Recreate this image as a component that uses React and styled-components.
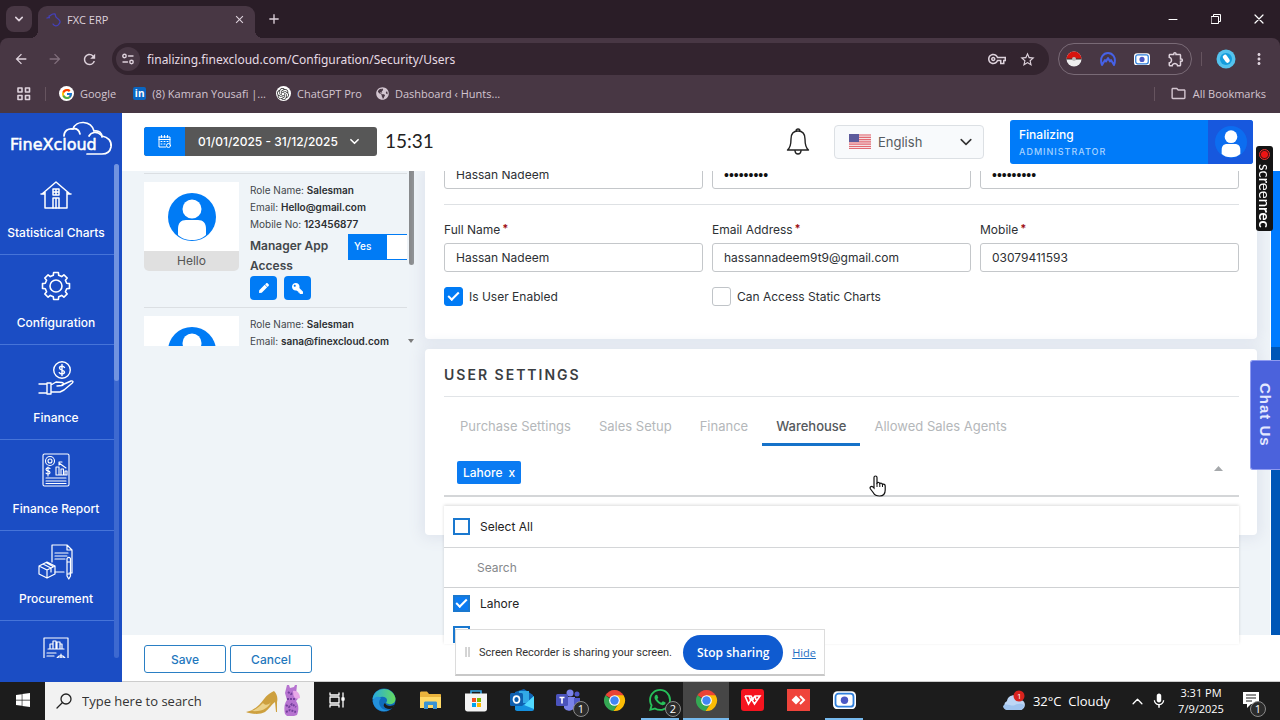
import React, { useState } from "react";
import styled, { createGlobalStyle, css } from "styled-components";
import {
  MdArrowBack,
  MdArrowForward,
  MdRefresh,
  MdClose,
  MdAdd,
  MdStarBorder,
  MdMoreVert,
  MdOutlineExtension,
  MdOutlineFolder,
  MdOutlineVpnKey,
  MdMic,
} from "react-icons/md";
import { FaWindows, FaPen, FaKey, FaGlobeAmericas } from "react-icons/fa";
import { FcGoogle } from "react-icons/fc";
import { SiOpenai, SiWhatsapp } from "react-icons/si";

const appFont = `"Inter", "Liberation Sans", sans-serif`;
const systemFont = `"Open Sans", "Noto Sans", sans-serif`;

const GlobalStyle = createGlobalStyle`
  * {
    box-sizing: border-box;
  }

  body {
    margin: 0;
    font-family: ${appFont};
    font-size: 13px;
    color: #333;
    overflow: hidden;
  }

  button, input, select {
    font-family: inherit;
    margin: 0;
  }

  button {
    cursor: pointer;
  }

  svg {
    display: block;
    flex-shrink: 0;
  }
`;

const Screen = styled.div`
  display: flex;
  flex-direction: column;
  height: 100vh;
`;

/* ---------- browser ---------- */

const Browser = styled.header`
  font-family: ${systemFont};
  background: #2a1d27;
  color: #ded2dc;
  font-size: 12px;
`;

const TabStrip = styled.div`
  display: flex;
  align-items: center;
  height: 38px;
  padding-left: 6px;
`;

const PlainButton = styled.button`
  display: flex;
  align-items: center;
  justify-content: center;
  width: ${(p) => p.$w || 24}px;
  height: 26px;
  padding: 0;
  border: none;
  border-radius: 8px;
  background: ${(p) => p.$bg || "none"};
  color: ${(p) => p.$color || "#ded2dc"};
`;

const BrowserTab = styled.div`
  position: relative;
  display: flex;
  align-items: center;
  gap: 6px;
  align-self: flex-end;
  width: 217px;
  height: 32px;
  margin: 0 7px 0 6px;
  padding: 0 5px 6px 8px;
  border-radius: 9px 9px 0 0;
  background: #483744;

  &::before,
  &::after {
    content: "";
    position: absolute;
    bottom: 0;
    width: 8px;
    height: 8px;
  }

  &::before {
    right: 100%;
    background: radial-gradient(circle at 0 0, transparent 8px, #483744 8px);
  }

  &::after {
    left: 100%;
    background: radial-gradient(circle at 100% 0, transparent 8px, #483744 8px);
  }
`;

const TabTitle = styled.span`
  flex: 1;
  font-size: 11px;
`;

const WindowButtons = styled.div`
  display: flex;
  margin-left: auto;

  button {
    width: 43px;
    color: #fff;
  }
`;

const Toolbar = styled.div`
  display: flex;
  align-items: center;
  height: 42px;
  padding: 0 6px;
  border-radius: 8px 8px 0 0;
  background: #483744;
`;

const NavButtons = styled.div`
  display: flex;
  gap: 4px;
  margin-right: 8px;
`;

const Omnibox = styled.div`
  display: flex;
  flex: 1;
  align-items: center;
  height: 32px;
  padding: 0 7px 0 4px;
  border-radius: 16px;
  background: #33242f;
`;

const SiteInfo = styled.button`
  display: flex;
  align-items: center;
  justify-content: center;
  width: 24px;
  height: 24px;
  margin-right: 7px;
  padding: 0;
  border: none;
  border-radius: 50%;
  background: #483744;
  color: #ded2dc;
`;

const Address = styled.input`
  flex: 1;
  min-width: 0;
  padding: 0;
  border: none;
  outline: none;
  background: none;
  color: #e6dbe4;
  font-family: "Noto Sans", sans-serif;
  font-size: 12px;
`;

const Extensions = styled.div`
  display: flex;
  align-items: center;
  gap: 8px;
  height: 32px;
  margin-left: 9px;
  padding: 0 2px;
  border: 1px solid #796a76;
  border-radius: 16px;
`;

const Divider = styled.span`
  width: 1px;
  height: 14px;
  background: #66545f;
  margin: ${(p) => p.$m || "0"};
`;

const BookmarkBar = styled.nav`
  display: flex;
  align-items: center;
  height: 33px;
  padding: 0 14px 6px 16px;
  background: #483744;
`;

const Bookmark = styled.a`
  display: flex;
  align-items: center;
  gap: 6px;
  margin-right: ${(p) => p.$gap || 0}px;
  color: #d3c5d0;
  font-size: 11px;
  text-decoration: none;
  white-space: nowrap;
`;

const RoundLogo = styled.span`
  display: flex;
  align-items: center;
  justify-content: center;
  width: 15px;
  height: 15px;
  border-radius: 50%;
  background: #fff;
  color: #333;
`;

const LinkedInLogo = styled.span`
  width: 13px;
  height: 13px;
  border-radius: 2px;
  background: #0a66c2;
  color: #fff;
  font-size: 10px;
  font-weight: 700;
  line-height: 12px;
  text-align: center;
`;

/* ---------- page shell ---------- */

const Page = styled.div`
  position: relative;
  display: flex;
  flex: 1;
  min-height: 0;
  background: #eff4f8;
`;

const Sidebar = styled.aside`
  display: flex;
  flex-direction: column;
  width: 122px;
  padding-bottom: 24px;
  background: #1b4dc4;
`;

const LogoLink = styled.a`
  padding: 8px 0 0 10px;
  height: 51px;
`;

const SideScroll = styled.div`
  display: flex;
  flex: 1;
  min-height: 0;
`;

const SideNav = styled.nav`
  flex: 1;
  min-width: 0;
  overflow: hidden;
`;

const SideLink = styled.a`
  display: flex;
  flex-direction: column;
  align-items: center;
  justify-content: space-between;
  height: ${(p) => p.$h || 91}px;
  padding: ${(p) => p.$top || 14}px 2px 12px 0;
  border-bottom: 1px solid #4674d8;
  color: #fff;
  font-size: 12px;
  font-weight: 500;
  line-height: 18px;
  text-decoration: none;
  white-space: nowrap;
`;

const SideTrack = styled.div`
  width: 5px;
  margin-right: 3px;
  border-radius: 3px;
  background: #3d69d0;

  &::before {
    content: "";
    display: block;
    height: 44%;
    border-radius: 3px;
    background: #7193e0;
  }
`;

const Main = styled.main`
  display: flex;
  flex: 1;
  flex-direction: column;
  min-width: 0;
`;

const TopBar = styled.div`
  position: relative;
  z-index: 2;
  display: flex;
  align-items: center;
  height: 58px;
  padding: 0 27px 1px 22px;
  background: #fff;
`;

const DateButton = styled.button`
  display: flex;
  align-items: center;
  width: 233px;
  height: 29px;
  padding: 0 18px 0 0;
  border: none;
  border-radius: 3px;
  overflow: hidden;
  background: #575757;
  color: #fff;
  font-size: 12px;
  font-weight: 500;
  white-space: nowrap;

  > span:first-child {
    display: flex;
    align-items: center;
    justify-content: center;
    width: 41px;
    height: 100%;
    margin-right: 13px;
    background: #007bf5;
  }

  > svg {
    margin-left: auto;
  }
`;

const Clock = styled.time`
  margin: 0 auto 0 8px;
  padding-bottom: 3px;
  font-family: "Lato", ${appFont};
  font-size: 19px;
  color: #222;
`;

const BellButton = styled.button`
  padding: 0;
  border: none;
  background: none;
  margin-right: 24px;
`;

const Language = styled.label`
  position: relative;
  display: flex;
  align-items: center;
  margin-right: 26px;

  > svg {
    position: absolute;
    pointer-events: none;
  }

  > svg:first-child {
    left: 15px;
  }

  > svg:last-child {
    right: 12px;
  }

  select {
    appearance: none;
    width: 150px;
    height: 34px;
    padding: 0 30px 0 43px;
    border: 1px solid #dce0e4;
    border-radius: 4px;
    background: #f8fafc;
    color: #555b61;
    font-size: 13px;
  }
`;

const Account = styled.button`
  display: flex;
  width: 243px;
  height: 44px;
  padding: 0;
  border: none;
  border-radius: 3px;
  overflow: hidden;
  background: #007bf9;
  color: #fff;
  text-align: left;
`;

const AccountText = styled.span`
  display: flex;
  flex: 1;
  flex-direction: column;
  justify-content: center;
  gap: 4px;
  padding-left: 9px;
  font-size: 12px;
  font-weight: 500;

  small {
    color: #a4d2ff;
    font-size: 9px;
    letter-spacing: 1px;
  }
`;

const AccountPhoto = styled.span`
  display: flex;
  align-items: center;
  justify-content: center;
  width: 45px;
  background: #1758de;
`;

const Content = styled.div`
  display: flex;
  flex: 1;
  min-height: 0;
  padding-left: 22px;
`;

const PageTrack = styled.div`
  width: 10px;
  margin-left: auto;
  border-left: 1px solid #fff;
  background: linear-gradient(#007bff 38%, #0057b7 38%);
`;

const Footer = styled.footer`
  display: flex;
  gap: 4px;
  height: 47px;
  padding: 10px 22px;
  border-bottom: 1px solid #ccc;
  background: #fff;
`;

const OutlineButton = styled.button`
  width: 82px;
  height: 28px;
  border: 1px solid #2a7fc4;
  border-radius: 3px;
  background: #fff;
  color: #1f78bd;
  font-size: 12px;
  font-weight: 500;
`;

/* ---------- user list ---------- */

const UserList = styled.section`
  display: flex;
  width: 271px;
  height: 175px;
  margin-right: 10px;
`;

const UserRows = styled.div`
  flex: 1;
  min-width: 0;
  padding-top: 2px;
  overflow: hidden;
`;

const ListTrack = styled.div`
  display: flex;
  flex-direction: column;
  align-items: center;
  justify-content: space-between;
  width: 8px;
  padding-bottom: 3px;

  &::before {
    content: "";
    width: 5px;
    height: 94px;
    border-radius: 0 0 3px 3px;
    background: #858789;
  }
`;

const UserRow = styled.article`
  display: flex;
  gap: 11px;
  height: 134px;
  padding-top: 8px;
  border-top: 1px solid #dbdfe3;
`;

const UserCard = styled.figure`
  width: 95px;
  height: 89px;
  margin: 0;
  border-radius: 0 0 5px 5px;
  overflow: hidden;
  background: #e0e0e0;
  flex-shrink: 0;

  > div {
    display: flex;
    align-items: center;
    justify-content: center;
    height: 69px;
    background: #fff;
  }

  figcaption {
    font-size: 12px;
    line-height: 20px;
    text-align: center;
    color: #555;
  }
`;

const UserInfo = styled.div`
  flex: 1;
  min-width: 0;
  font-size: 10px;
  line-height: 17px;
  white-space: nowrap;
  color: #43474b;

  b {
    font-weight: 600;
    color: #2b2e31;
  }
`;

const AppAccess = styled.div`
  display: flex;
  justify-content: space-between;
  padding-top: 1px;
  font-size: 12px;
  font-weight: 600;
  line-height: 20px;
  white-space: normal;
  color: #43474b;

  > span {
    width: 92px;
    padding-top: 2px;
  }
`;

const Toggle = styled.button`
  display: flex;
  width: 59px;
  height: 26px;
  padding: 0 0 3px 5px;
  border: 1px solid #007bf5;
  border-right: none;
  background: linear-gradient(90deg, #007bf5 38px, #fff 38px);
  color: #fff;
  font-size: 10px;
  font-weight: 500;
  align-items: center;
`;

const RowActions = styled.div`
  display: flex;
  gap: 7px;

  button {
    display: flex;
    align-items: center;
    justify-content: center;
    width: 27px;
    height: 24px;
    padding: 0;
    border: none;
    border-radius: 4px;
    background: #007bf5;
    color: #fff;
  }

  button:last-child svg {
    transform: scaleX(-1);
  }
`;

/* ---------- user form ---------- */

const FormColumn = styled.div`
  display: flex;
  flex: 1;
  flex-direction: column;
  gap: 10px;
  min-width: 0;
  margin-right: 13px;
`;

const Panel = styled.section`
  padding: 0 18px 0 19px;
  border-radius: 0 0 4px 4px;
  background: #fff;
  box-shadow: 0 0 14px 4px #e0e5ee;
`;

const FieldGrid = styled.div`
  display: grid;
  grid-template-columns: repeat(3, 1fr);
  gap: 15px 9px;
  ${(p) =>
    p.$first &&
    css`
      margin-top: -11px;
      padding-bottom: 15px;
      border-bottom: 1px solid #dee1e4;
    `}
  ${(p) =>
    !p.$first &&
    css`
      padding: 16px 0 33px;
    `}
`;

const Field = styled.label`
  display: flex;
  flex-direction: column;
  gap: 5px;
  line-height: 17px;
  font-size: 12px;
  color: #2d3034;

  sup {
    color: #a00f14;
    font-size: 11px;
    font-weight: 700;
    line-height: 8px;
    margin-left: 2px;
    vertical-align: 2px;
  }

  input {
    width: 100%;
    height: 29px;
    padding: 0 11px;
    border: 1px solid #c4c7ca;
    border-radius: 3px;
    background: #fff;
    color: #2d3034;
    font-size: 12px;
  }

  input[type="password"] {
    font-family: "Liberation Sans", sans-serif;
    font-size: 14px;
    color: #111;
  }
`;

const checkMark = css`
  &:checked::after {
    content: "";
    width: 9px;
    height: 4px;
    margin-top: -3px;
    border-left: 2px solid #fff;
    border-bottom: 2px solid #fff;
    transform: rotate(-45deg);
  }
`;

const CheckField = styled.label`
  display: flex;
  align-items: center;
  gap: 6px;
  font-size: 12px;
  color: #2d3034;

  input {
    appearance: none;
    display: grid;
    place-items: center;
    width: 19px;
    height: 19px;
    border: 1px solid #c0c4c8;
    border-radius: 3px;
    background: #fff;
    ${checkMark}
  }

  input:checked {
    border-color: #007bf5;
    background: #007bf5;
  }
`;

const SettingsPanel = styled(Panel)`
  height: 186px;
  border-radius: 4px;
`;

const SettingsTitle = styled.h2`
  margin: 0;
  padding: 16px 0 11px;
  border-bottom: 1px solid #e1e4e7;
  font-size: 14px;
  font-weight: 600;
  letter-spacing: 2px;
  line-height: 20px;
  color: #3b3e42;
`;

const TabList = styled.div`
  display: flex;
  padding: 12px 0 0 2px;
`;

const SettingsTab = styled.button`
  height: 37px;
  padding: 0 14px;
  border: none;
  border-bottom: 3px solid ${(p) => (p.$active ? "#1672c9" : "transparent")};
  background: none;
  color: ${(p) => (p.$active ? "#55595d" : "#b4b7ba")};
  font-size: 13px;
  font-weight: ${(p) => (p.$active ? 500 : 400)};
  white-space: nowrap;
`;

const MultiSelect = styled.div`
  position: relative;
`;

const SelectedBox = styled.div`
  display: flex;
  align-items: center;
  justify-content: space-between;
  height: 51px;
  padding: 4px 16px 0 13px;
  border-bottom: 2px solid #d4d6d8;

  > svg {
    align-self: flex-start;
    margin-top: 16px;
  }
`;

const Chip = styled.button`
  display: flex;
  align-items: center;
  gap: 6px;
  height: 23px;
  padding: 0 6px;
  border: none;
  border-radius: 2px;
  background: #0b7bf2;
  color: #fff;
  font-size: 12px;
  font-weight: 500;
`;

const Dropdown = styled.div`
  position: absolute;
  z-index: 1;
  top: 60px;
  left: 0;
  right: 0;
  height: 138px;
  overflow: hidden;
  background: #fff;
  box-shadow: 0 -1px 3px rgba(0, 0, 0, 0.14);
`;

const Option = styled.label`
  display: flex;
  align-items: center;
  gap: 10px;
  height: ${(p) => (p.$head ? 42 : 31)}px;
  padding-left: 9px;
  border-bottom: ${(p) => (p.$head ? "1px solid #d4d6d8" : "none")};
  font-size: 12px;
  color: #222;

  input {
    appearance: none;
    display: grid;
    place-items: center;
    width: 17px;
    height: 17px;
    border: 2px solid #1a78cf;
    background: #fff;
    ${checkMark}
  }

  input:checked {
    background: #0b7bf2;
  }
`;

const SearchInput = styled.input`
  display: block;
  width: 100%;
  height: 40px;
  padding: 0 33px;
  border: none;
  border-bottom: 1px solid #cfd1d3;
  font-size: 12px;

  &::placeholder {
    color: #85888b;
  }
`;

/* ---------- overlays ---------- */

const ScreenRec = styled.div`
  position: fixed;
  z-index: 3;
  top: 146px;
  right: 7px;
  display: flex;
  align-items: center;
  gap: 4px;
  width: 17px;
  height: 85px;
  padding: 3px 0;
  border-radius: 3px;
  background: #141414;
  color: #fff;
  font-family: "Lato", sans-serif;
  font-size: 15px;
  line-height: 17px;
  writing-mode: vertical-rl;

  i {
    width: 11px;
    height: 11px;
    border: 1px solid #e33;
    border-radius: 50%;
    background: radial-gradient(circle, #f01414 3px, #4a1010 4px);
  }
`;

const ChatButton = styled.button`
  position: fixed;
  z-index: 3;
  top: 360px;
  right: 0;
  width: 30px;
  height: 110px;
  padding: 0;
  border: 1px solid #8f9bf0;
  border-right: none;
  border-radius: 3px 0 0 3px;
  background: #4b62dc;
  color: #e4e8ff;
  font-family: "Liberation Sans", sans-serif;
  font-size: 15px;
  font-weight: 700;
  letter-spacing: 1px;
  writing-mode: vertical-rl;
`;

const ShareBar = styled.div`
  position: fixed;
  z-index: 3;
  bottom: 44px;
  left: 50%;
  display: flex;
  align-items: center;
  width: 370px;
  height: 47px;
  padding: 0 8px 0 9px;
  border: 1px solid #dcdcdc;
  border-bottom: 2px solid #c8c8c8;
  background: #fff;
  transform: translateX(-50%);
  font-family: ${systemFont};
  font-size: 11px;
  white-space: nowrap;

  > svg {
    margin-right: 9px;
  }

  > span {
    font-family: "Roboto", sans-serif;
  }

  button {
    width: 100px;
    height: 35px;
    margin: 0 9px 0 auto;
    padding: 0;
    border: none;
    border-radius: 18px;
    background: #0f5bd0;
    color: #fff;
    font-size: 12px;
    font-weight: 600;
  }

  a {
    color: #1f6fc4;
  }
`;

const Cursor = styled.svg`
  position: fixed;
  z-index: 4;
  left: 869px;
  top: 475px;
`;

/* ---------- taskbar ---------- */

const Taskbar = styled.footer`
  display: flex;
  align-items: stretch;
  height: 38px;
  background: #1c1c1c;
  color: #fff;
  font-family: ${systemFont};
`;

const TaskButton = styled.button`
  position: relative;
  display: flex;
  align-items: center;
  justify-content: center;
  width: ${(p) => p.$w || 46}px;
  padding: 0;
  border: none;
  border-bottom: 2px solid transparent;
  background: ${(p) => (p.$active ? "#464646" : "none")};
  color: #fff;

  &::after {
    content: "";
    position: absolute;
    bottom: -2px;
    left: ${(p) => (p.$active ? 0 : 4)}px;
    right: ${(p) => (p.$active ? 0 : 4)}px;
    height: 2px;
    background: ${(p) => (p.$open ? "#76b9ed" : "none")};
  }
`;

const Count = styled.span`
  position: absolute;
  right: ${(p) => p.$right || 0}px;
  bottom: ${(p) => p.$bottom || 1}px;
  width: 16px;
  height: 16px;
  border: 1px solid #8a8a8a;
  border-radius: 50%;
  background: #2b2b2b;
  font-size: 11px;
  line-height: 14px;
  text-align: center;
`;

const SearchBox = styled.label`
  display: flex;
  align-items: center;
  width: 269px;
  padding: 0 10px 0 11px;
  background: #f2f2f2;
  color: #222;

  input {
    flex: 1;
    min-width: 0;
    padding: 0 0 0 10px;
    border: none;
    background: none;
    font-size: 13px;
  }

  input::placeholder {
    color: #333;
  }
`;

const Tray = styled.div`
  display: flex;
  align-items: center;
  margin-left: auto;
  padding-right: 10px;
  font-size: 13px;
  white-space: nowrap;
`;

const Weather = styled.span`
  display: flex;
  align-items: center;
  gap: 5px;
  margin-right: 22px;
`;

const TrayIcons = styled.span`
  display: flex;
  align-items: center;
  gap: 7px;
`;

const TrayClock = styled.time`
  width: 58px;
  margin: 0 2px 0 4px;
  font-size: 11px;
  line-height: 16px;
  text-align: center;
`;

/* ---------- drawings ---------- */

const Line = ({ w, h, box, sw = 1, children, ...rest }) => (
  <svg
    width={w}
    height={h}
    viewBox={box || `0 0 ${w} ${h}`}
    fill="none"
    stroke="currentColor"
    strokeWidth={sw}
    strokeLinejoin="round"
    strokeLinecap="round"
    aria-hidden="true"
    {...rest}
  >
    {children}
  </svg>
);

const CloudLogo = () => (
  <svg width="103" height="38" viewBox="0 0 103 38" aria-label="FineXcloud">
    <text x="0" y="29" fill="#fff" stroke="#fff" strokeWidth=".5" fontFamily="DejaVu Sans, sans-serif" fontSize="16">
      FineXcloud
    </text>
    <g fill="none" stroke="#fff" strokeWidth="1.7" strokeLinecap="round">
      <path d="M54 15c0-5 4-8 9-7 3-9 18-9 21 2 5-1 8 2 8 6" />
      <path d="M62 8c4-1 7 1 8 5M79 15c2-4 8-5 12-1" />
      <path d="M92 15c6 1 10 5 9 11-1 5-5 7-9 7H77" />
    </g>
  </svg>
);

const HouseIcon = () => (
  <Line w={32} h={30} sw={1.5}>
    <path d="M2 14 16 2l14 12M5 12v16h22V12M1 14h4M27 14h4" />
    <path d="M13 28V18h6v10M13 9h6v6h-6zM16 9v6M13 12h6M16 18v10" />
  </Line>
);

// teeth are generated so that the eight of them stay evenly spaced
const gearPath = Array.from({ length: 8 })
  .map((_, i) => {
    const at = (r, deg) => {
      const a = ((i * 45 + deg) * Math.PI) / 180;
      return `${(15 + r * Math.cos(a)).toFixed(1)} ${(15 + r * Math.sin(a)).toFixed(1)}`;
    };
    return `${i ? "L" : "M"}${at(11, -14)}L${at(13.7, -10)}L${at(13.7, 10)}L${at(11, 14)}`;
  })
  .join("");

const GearIcon = () => (
  <Line w={30} h={30} sw={1.6}>
    <path d={`${gearPath}Z`} />
    <circle cx="15" cy="15" r="6" />
  </Line>
);

const HandCoinIcon = () => (
  <Line w={36} h={34} sw={1.4}>
    <circle cx="24" cy="9" r="8.3" />
    <path d="M26.500 6.500c-1-1.800-5-1.600-5 .6s5 1.800 5 4-4 2.400-5.200.6M24 3.500v11" />
    <path d="M1 23h8v9H1M9 22h4v11H9M13 24l5-3 6 .5c2 .5 2 2.500 0 3l-5 .5M24 24l9-4c2-.4 2.500.8 1.300 2L26 29l-4 2h-9" />
  </Line>
);

const ReportIcon = () => (
  <Line w={28} h={34} sw={1.1}>
    <rect x="1" y="1" width="26" height="32" rx="1.5" />
    <circle cx="8" cy="8" r="4.5" />
    <circle cx="8" cy="8" r="2" />
    <path d="M14 22v-8h3v8zM19 22v-6h2.500v6zM23 22v-4h2v4zM14 22h11M17 10l7 5M17 12v-3h3M4 25h20M4 28h20M4 30.500h20" />
    <path d="M8 15.500c-1.200-1.200-4-.8-4 1s4 1 4 2.900-3 2-4 .8M6 14v9" />
  </Line>
);

const ProcurementIcon = () => (
  <Line w={36} h={36} sw={1.2}>
    <path d="M14 18V1h15l5 5v23h-3M29 1v5h5M26 28h-9M17 9h13M17 12h12M17 15h10" />
    <path d="M29 14.500c1.200-1.500 2.400-1.500 3.500 0V32l-1.700 3-1.800-3zM29 18h3.500M29 30h3.500" />
    <path d="m1 22 8-4 8 4-8 4zM1 22v8l8 4v-8M17 22v8l-8 4M5 20l8 4v4M8 18.500l7 4" />
  </Line>
);

const ChartPageIcon = () => (
  <Line w={26} h={34} sw={1.2}>
    <path d="M1 33V1h24v32M7 12V7h3v5zM10 12V4h3v8zM14 12V5h3v7zM17 12V7h2v5zM5 12h16M4 16h9M4 19h7M4 22h7" />
    <path d="M14 21a4.500 4.500 0 0 1 8 0zM18 17v4" />
  </Line>
);

const CalendarIcon = () => (
  <Line w={13} h={13}>
    <path d="M1 2h11v7M1 2v10h7M1 4.500h11M3.500.5v2M6.500.5v2M9.500.5v2M3 6.500h1M6 6.500h1M9 6.500h1M3 9h1M6 9h1" />
    <circle cx="10.5" cy="10.5" r="2" />
  </Line>
);

const BellIcon = () => (
  <Line w={24} h={28} sw={1.4} color="#222">
    <path d="M10 3a2 2 0 0 1 4 0M12 3c-5 0-7 3.500-7 8 0 6-1 9-3.500 11h21C20 20 19 17 19 11c0-4.500-2-8-7-8zM9 23c.5 4 5.500 4 6 0" />
  </Line>
);

const FlagIcon = () => (
  <svg width="22" height="15" viewBox="0 0 22 15" aria-hidden="true">
    <rect width="22" height="15" fill="#f3e3e5" />
    <path
      d="M0 1h22M0 3.300h22M0 5.600h22M0 7.900h22M0 10.200h22M0 12.500h22M0 14.500h22"
      stroke="#e36a74"
      strokeWidth="1.2"
    />
    <rect width="10" height="8" fill="#5c5b9c" />
  </svg>
);

const Person = ({ size, back = "#007bf5" }) => (
  <svg width={size} height={size} viewBox="0 0 48 48" aria-hidden="true">
    <circle cx="24" cy="24" r="24" fill={back} />
    <circle cx="24" cy="16" r="9.5" fill="#fff" />
    <path d="M10 42V36c0-6 3-9 8-9h12c5 0 8 3 8 9v6c-3 3-8 5-14 5s-11-2-14-5z" fill="#fff" />
  </svg>
);

const Chevron = ({ size = 10, sw = 1.6, up }) => (
  <Line w={size} h={size} box="0 0 10 10" sw={sw}>
    <path d={up ? "m1 7 4-4 4 4" : "m1 3 4 4 4-4"} />
  </Line>
);

const ChromeLogo = () => (
  <svg width="23" height="23" viewBox="0 0 24 24" aria-hidden="true">
    <path d="M12 12 2.500 6.500a11 11 0 0 1 19 0z" fill="#ea4335" />
    <path d="M12 12h-2L2.500 6.500A11 11 0 0 0 11 23l5-8.500z" fill="#34a853" />
    <path d="M12 6.500h9.500A11 11 0 0 1 11 23l5.500-8.500z" fill="#fbbc05" />
    <circle cx="12" cy="12" r="5.6" fill="#fff" />
    <circle cx="12" cy="12" r="4.4" fill="#4285f4" />
  </svg>
);

const EdgeLogo = () => (
  <svg width="24" height="24" viewBox="0 0 24 24" aria-hidden="true">
    <defs>
      <linearGradient id="edgeTop" x1="0" x2="1">
        <stop offset="0" stopColor="#27a9e1" />
        <stop offset="1" stopColor="#66dc5c" />
      </linearGradient>
    </defs>
    <circle cx="12" cy="12" r="11.5" fill="#0f6cbd" />
    <path d="M.6 11C2-1 20-3 23.400 10c.8 6-6 7.500-9.400 5 3-4-1-7-5-6S1 12 .6 11z" fill="url(#edgeTop)" />
    <path d="M9 10c-5 6 1 13 8 12-6 3-15 0-16.300-9C2 9 6 7.500 9 10z" fill="#2391dc" />
    <path d="M13 15c1 3 6 4 9.500 1.500L21 20c-6 3-12-2-8-5z" fill="#1c1c1c" />
  </svg>
);

const FolderLogo = () => (
  <svg width="21" height="19" viewBox="0 0 21 19" aria-hidden="true">
    <path d="M0 2c0-1 .5-1.500 1.500-1.500H7L9 3h11c.6 0 1 .4 1 1v13H0z" fill="#e9b33c" />
    <path d="M0 6h21v11H0z" fill="#ffd966" />
    <path d="M4 18v-6c0-1 .6-1.500 1.500-1.500h10c1 0 1.500.5 1.500 1.500v6h-4v-4H8v4z" fill="#3a93d2" />
  </svg>
);

const StoreLogo = () => (
  <svg width="22" height="23" viewBox="0 0 22 23" aria-hidden="true">
    <path d="M6 6V2h10v4" fill="none" stroke="#37a6e6" strokeWidth="1.6" />
    <path d="M0 4.500h22V20c0 1.500-1 2.500-2.500 2.500h-17C1 22.500 0 21.500 0 20z" fill="#f4f4f4" />
    <path d="M7 9h4v4H7z" fill="#f25022" />
    <path d="M12 9h4v4h-4z" fill="#7fba00" />
    <path d="M7 14h4v4H7z" fill="#00a4ef" />
    <path d="M12 14h4v4h-4z" fill="#ffb900" />
  </svg>
);

const OutlookLogo = () => (
  <svg width="24" height="22" viewBox="0 0 24 22" aria-hidden="true">
    <path d="M5 3 14 0l9 6v15H5z" fill="#1066b5" />
    <path d="M9 2h10v12H9z" fill="#32a9e7" />
    <path d="m5 12 9 4 10-9v13c0 1-.6 2-2 2H7c-1 0-2-.8-2-2z" fill="#1490df" />
    <path d="m14 16 10-9v13z" fill="#50d9ff" />
    <rect y="4" width="13" height="13" rx="1.5" fill="#0f5fae" />
    <ellipse cx="6.5" cy="10.5" rx="3" ry="3.4" fill="none" stroke="#fff" strokeWidth="1.7" />
  </svg>
);

const TeamsLogo = () => (
  <svg width="24" height="22" viewBox="0 0 24 22" aria-hidden="true">
    <circle cx="14" cy="4" r="3.5" fill="#7b83eb" />
    <circle cx="21" cy="5" r="2.5" fill="#5059c9" />
    <path d="M8 8h11v8a6 6 0 0 1-11 3z" fill="#7b83eb" />
    <path d="M18 9h6v7a4 4 0 0 1-6 2z" fill="#5059c9" />
    <rect y="5" width="12" height="12" rx="1.5" fill="#4b53bc" />
    <path d="M3.500 8.500h5M6 8.500v6" stroke="#fff" strokeWidth="1.6" />
  </svg>
);

const WpsLogo = () => (
  <svg width="23" height="22" viewBox="0 0 23 22" aria-hidden="true">
    <rect width="23" height="22" rx="3" fill="#f5141f" />
    <path
      d="M4 7h6l2.500 4M4 7l3.500 8 3-5 3 5L19 7h-5l-3 4M8 7l1.500 4M14 7l1 4"
      fill="none"
      stroke="#fff"
      strokeWidth="1.6"
    />
  </svg>
);

const AnyDeskLogo = () => (
  <svg width="23" height="22" viewBox="0 0 23 22" aria-hidden="true">
    <rect width="23" height="22" fill="#ef443b" />
    <path d="m9 6.500 4.500 4.500L9 15.500 4.500 11z" fill="#fff" />
    <path d="m13 7 4 4-4 4" fill="none" stroke="#fff" strokeWidth="2" />
  </svg>
);

const RecorderLogo = ({ size = 23 }) => (
  <svg width={size} height={size * 0.8} viewBox="0 0 23 18" aria-hidden="true">
    <rect width="23" height="18" rx="4.5" fill="#fff" />
    <rect x="2.5" y="2.5" width="18" height="13" rx="3" fill="none" stroke="#2f7fdc" strokeWidth="1.8" />
    <circle cx="11.5" cy="9" r="3.7" fill="#4b58c4" />
  </svg>
);

const SearchArt = () => (
  <svg width="58" height="34" viewBox="0 0 58 34" aria-hidden="true">
    <path
      d="M0 28c7-1 13-6 18-13 3-4 6-6 10-8 3 3 4 7 3 11v10h-1l-1-10c-3 2-6 7-10 10-5 3-15 2-19 0z"
      fill="#cda03f"
    />
    <path d="M5 27c5-1 9-5 12-8 2 3 6 2 8-1-3 6-8 10-20 9z" fill="#ecd28a" />
    <path
      d="M41 1h2l1 3 4-1 1-2h2l-1 9c3 2 3 4 0 7 3 4 3 9 1 14l-3 1h-7l-2-2c-1-5-1-10 2-14l-2-7z"
      fill="#b673d0"
    />
    <path
      d="M42 8l3 2 4-2M41 15h8M40 21l3 2 3-3 4 3M40 28l4-2 6 2"
      fill="none"
      stroke="#74409d"
      strokeWidth="2"
      strokeDasharray="2 1"
    />
    <path d="M47 7c4-1 7 3 7 7-4 2-7 0-7-7z" fill="#e8a7e8" />
  </svg>
);

const WeatherIcon = () => (
  <svg width="26" height="22" viewBox="0 0 26 22" aria-hidden="true">
    <path d="M5 20a5 5 0 0 1 0-9c1-7 11-8 13-1 7 0 6 10 0 10z" fill="#bdd6f5" />
    <path d="M1 16c4-4 8 1 12-1s7-1 9 0c0 3-2 5-4 5H5c-2 0-4-2-4-4z" fill="#9fc3ee" />
    <circle cx="17" cy="6" r="5.5" fill="#d8231e" />
    <text x="15" y="9" fill="#fff" fontSize="8" fontFamily="Open Sans, sans-serif">
      1
    </text>
  </svg>
);

const NoteIcon = () => (
  <svg width="16" height="17" viewBox="0 0 16 17" aria-hidden="true">
    <path d="M0 0h16v12H8l-4 4v-4H0z" fill="#fff" />
    <path d="M3 3h10M3 6h10M3 9h6" stroke="#1c1c1c" />
  </svg>
);

const menu = [
  { id: "charts", label: "Statistical Charts", icon: <HouseIcon />, h: 91, top: 16 },
  { id: "configuration", label: "Configuration", icon: <GearIcon />, h: 90, top: 16 },
  { id: "finance", label: "Finance", icon: <HandCoinIcon />, h: 95, top: 16 },
  { id: "finance-report", label: "Finance Report", icon: <ReportIcon />, h: 91, top: 13 },
  { id: "procurement", label: "Procurement", icon: <ProcurementIcon />, h: 90, top: 13 },
  { id: "more", icon: <ChartPageIcon />, h: 90, top: 16 },
];

const users = [
  { name: "Hello", role: "Salesman", email: "Hello@gmail.com", mobile: "123456877" },
  { role: "Salesman", email: "sana@finexcloud.com" },
];

const tabs = ["Purchase Settings", "Sales Setup", "Finance", "Warehouse", "Allowed Sales Agents"];

function BrowserChrome() {
  return (
    <Browser>
      <TabStrip>
        <PlainButton $w={26} $bg="#483744" aria-label="Search tabs">
          <Chevron size={8} sw={2} />
        </PlainButton>
        <BrowserTab>
          <Line w={15} h={15} color="#4440b8" sw={1.3}>
            <path d="M1 6c2-1 3 1 2-2 1 1 2-3 6-2 1 2 0 3 2 4 3 2 4 4 2 6-2 3-5 2-6 0" />
          </Line>
          <TabTitle>FXC ERP</TabTitle>
          <PlainButton $w={22} aria-label="Close tab">
            <MdClose size={13} />
          </PlainButton>
        </BrowserTab>
        <PlainButton aria-label="New tab">
          <MdAdd size={16} />
        </PlainButton>
        <WindowButtons>
          <PlainButton aria-label="Minimize">
            <Line w={10} h={10}>
              <path d="M1 5.500h8" />
            </Line>
          </PlainButton>
          <PlainButton aria-label="Restore">
            <Line w={10} h={10}>
              <path d="M.5 2.500h7v7h-7zM2.500 2.500v-2h7v7h-2" />
            </Line>
          </PlainButton>
          <PlainButton aria-label="Close window">
            <Line w={10} h={10} sw={1.2}>
              <path d="m1 1 8 8M9 1 1 9" />
            </Line>
          </PlainButton>
        </WindowButtons>
      </TabStrip>
      <Toolbar>
        <NavButtons>
          <PlainButton $w={30} aria-label="Back">
            <MdArrowBack size={16} />
          </PlainButton>
          <PlainButton $w={30} $color="#816f7c" aria-label="Forward">
            <MdArrowForward size={16} />
          </PlainButton>
          <PlainButton $w={30} aria-label="Reload">
            <MdRefresh size={17} />
          </PlainButton>
        </NavButtons>
        <Omnibox>
          <SiteInfo aria-label="Site information">
            <Line w={12} h={12} sw={1.4}>
              <circle cx="2.5" cy="3" r="1.7" />
              <circle cx="9.5" cy="9" r="1.7" />
              <path d="M6.500 3H11M1 9h4.500" />
            </Line>
          </SiteInfo>
          <Address aria-label="Address" defaultValue="finalizing.finexcloud.com/Configuration/Security/Users" />
          <PlainButton $w={30} aria-label="Passwords">
            <MdOutlineVpnKey size={18} />
          </PlainButton>
          <PlainButton $w={30} aria-label="Bookmark this page">
            <MdStarBorder size={17} />
          </PlainButton>
        </Omnibox>
        <Extensions>
          <PlainButton $w={26} aria-label="Poke extension">
            <svg width="16" height="16" viewBox="0 0 16 16">
              <circle cx="8" cy="8" r="7.5" fill="#eee" />
              <path d="M.5 8a7.500 7.500 0 0 1 15 0z" fill="#d7140f" />
              <path d="M.5 8h15" stroke="#333" />
              <circle cx="8" cy="8" r="2" fill="#bbb" />
            </svg>
          </PlainButton>
          <PlainButton $w={26} aria-label="VPN extension">
            <svg width="16" height="14" viewBox="0 0 16 14">
              <path
                d="M2 13C-1 5 4 1 8 1s9 4 6 12l-3-5-1 1.500L8 6 6 9.500 5 8z"
                fill="none"
                stroke="#4661e6"
                strokeWidth="2"
                strokeLinejoin="round"
              />
            </svg>
          </PlainButton>
          <PlainButton $w={26} aria-label="Screen Recorder">
            <RecorderLogo size={16} />
          </PlainButton>
          <PlainButton $w={26} aria-label="Extensions">
            <MdOutlineExtension size={18} />
          </PlainButton>
        </Extensions>
        <Divider $m="0 6px 0 9px" />
        <PlainButton $w={36} aria-label="Profile">
          <svg width="20" height="20" viewBox="0 0 20 20">
            <circle cx="10" cy="10" r="9.5" fill="#54c3ee" />
            <circle cx="10" cy="10" r="6" fill="#139ddd" />
            <path d="m9 8 2.500 3.500" stroke="#fff" strokeWidth="4.5" strokeLinecap="round" />
          </svg>
        </PlainButton>
        <PlainButton $w={30} aria-label="Menu">
          <MdMoreVert size={18} />
        </PlainButton>
      </Toolbar>
      <BookmarkBar>
        <Line w={15} h={15} sw={1.6}>
          <path d="M2 2h4v4H2zM9.500 2h4v4h-4zM2 9.500h4v4H2zM9.500 9.500h4v4h-4z" />
        </Line>
        <Divider $m="0 13px 0 14px" />
        <Bookmark href="#" $gap={17}>
          <RoundLogo>
            <FcGoogle size={12} />
          </RoundLogo>
          Google
        </Bookmark>
        <Bookmark href="#" $gap={10}>
          <LinkedInLogo>in</LinkedInLogo>
          (8) Kamran Yousafi |...
        </Bookmark>
        <Bookmark href="#" $gap={14}>
          <RoundLogo>
            <SiOpenai size={12} />
          </RoundLogo>
          ChatGPT Pro
        </Bookmark>
        <Bookmark href="#">
          <FaGlobeAmericas size={13} />
          Dashboard ‹ Hunts...
        </Bookmark>
        <Divider $m="0 15px 0 auto" />
        <Bookmark href="#">
          <MdOutlineFolder size={17} />
          All Bookmarks
        </Bookmark>
      </BookmarkBar>
    </Browser>
  );
}

function UserItem({ user }) {
  return (
    <UserRow>
      <UserCard>
        <div>
          <Person size={48} />
        </div>
        {user.name && <figcaption>{user.name}</figcaption>}
      </UserCard>
      <UserInfo>
        <div>
          Role Name: <b>{user.role}</b>
        </div>
        <div>
          Email: <b>{user.email}</b>
        </div>
        {user.mobile && (
          <>
            <div>
              Mobile No: <b>{user.mobile}</b>
            </div>
            <AppAccess>
              <span>Manager App Access</span>
              <Toggle aria-pressed="true">Yes</Toggle>
            </AppAccess>
            <RowActions>
              <button aria-label="Edit user">
                <FaPen size={10} />
              </button>
              <button aria-label="Change password">
                <FaKey size={11} />
              </button>
            </RowActions>
          </>
        )}
      </UserInfo>
    </UserRow>
  );
}

function WarehouseSelect() {
  const [selected, setSelected] = useState(true);

  return (
    <MultiSelect>
      <SelectedBox>
        {selected ? (
          <Chip onClick={() => setSelected(false)}>
            Lahore <span>x</span>
          </Chip>
        ) : (
          <span />
        )}
        <svg width="9" height="5" viewBox="0 0 9 5">
          <path d="M0 5 4.500 0 9 5z" fill="#a5a8ab" />
        </svg>
      </SelectedBox>
      <Dropdown>
        <Option $head>
          <input type="checkbox" />
          Select All
        </Option>
        <SearchInput placeholder="Search" aria-label="Search" />
        <Option>
          <input type="checkbox" checked={selected} onChange={(e) => setSelected(e.target.checked)} />
          Lahore
        </Option>
        <Option>
          <input type="checkbox" aria-label="Other warehouse" />
        </Option>
      </Dropdown>
    </MultiSelect>
  );
}

function App() {
  const [tab, setTab] = useState("Warehouse");

  return (
    <Screen>
      <GlobalStyle />
      <BrowserChrome />
      <Page>
        <Sidebar>
          <LogoLink href="#">
            <CloudLogo />
          </LogoLink>
          <SideScroll>
            <SideNav>
              {menu.map((item) => (
                <SideLink href="#" key={item.id} $h={item.h} $top={item.top}>
                  {item.icon}
                  {item.label}
                </SideLink>
              ))}
            </SideNav>
            <SideTrack />
          </SideScroll>
        </Sidebar>
        <Main>
          <TopBar>
            <DateButton>
              <span>
                <CalendarIcon />
              </span>
              01/01/2025 - 31/12/2025
              <Chevron size={9} sw={1.8} />
            </DateButton>
            <Clock>15:31</Clock>
            <BellButton aria-label="Notifications">
              <BellIcon />
            </BellButton>
            <Language>
              <FlagIcon />
              <select aria-label="Language" defaultValue="English">
                <option>English</option>
              </select>
              <Chevron size={12} sw={1.3} />
            </Language>
            <Account>
              <AccountText>
                Finalizing
                <small>ADMINISTRATOR</small>
              </AccountText>
              <AccountPhoto>
                <Person size={32} back="#0c6df0" />
              </AccountPhoto>
            </Account>
          </TopBar>
          <Content>
            <UserList>
              <UserRows>
                {users.map((user) => (
                  <UserItem key={user.email} user={user} />
                ))}
              </UserRows>
              <ListTrack>
                <svg width="6" height="4" viewBox="0 0 6 4">
                  <path d="M0 0h6L3 4z" fill="#777" />
                </svg>
              </ListTrack>
            </UserList>
            <FormColumn>
              <Panel>
                <FieldGrid $first>
                  <Field>
                    <input aria-label="User Name" defaultValue="Hassan Nadeem" />
                  </Field>
                  <Field>
                    <input aria-label="Password" type="password" defaultValue="123456789" />
                  </Field>
                  <Field>
                    <input aria-label="Confirm Password" type="password" defaultValue="123456789" />
                  </Field>
                </FieldGrid>
                <FieldGrid>
                  <Field>
                    <span>
                      Full Name<sup>*</sup>
                    </span>
                    <input defaultValue="Hassan Nadeem" />
                  </Field>
                  <Field>
                    <span>
                      Email Address<sup>*</sup>
                    </span>
                    <input defaultValue="hassannadeem9t9@gmail.com" />
                  </Field>
                  <Field>
                    <span>
                      Mobile<sup>*</sup>
                    </span>
                    <input defaultValue="03079411593" />
                  </Field>
                  <CheckField>
                    <input type="checkbox" defaultChecked />
                    Is User Enabled
                  </CheckField>
                  <CheckField>
                    <input type="checkbox" />
                    Can Access Static Charts
                  </CheckField>
                </FieldGrid>
              </Panel>
              <SettingsPanel>
                <SettingsTitle>USER SETTINGS</SettingsTitle>
                <TabList role="tablist">
                  {tabs.map((name) => (
                    <SettingsTab
                      key={name}
                      role="tab"
                      aria-selected={tab === name}
                      $active={tab === name}
                      onClick={() => setTab(name)}
                    >
                      {name}
                    </SettingsTab>
                  ))}
                </TabList>
                <WarehouseSelect />
              </SettingsPanel>
            </FormColumn>
            <PageTrack />
          </Content>
          <Footer>
            <OutlineButton>Save</OutlineButton>
            <OutlineButton>Cancel</OutlineButton>
          </Footer>
        </Main>
      </Page>

      <ScreenRec>
        <i />
        <span>
          screen<b>rec</b>
        </span>
      </ScreenRec>
      <ChatButton>Chat Us</ChatButton>
      <ShareBar>
        <Line w={5} h={10} color="#aaa">
          <path d="M1 0v10M4 0v10" />
        </Line>
        <span>Screen Recorder is sharing your screen.</span>
        <button>Stop sharing</button>
        <a href="#">Hide</a>
      </ShareBar>
      <Cursor width="18" height="22" viewBox="0 0 18 22">
        <path
          d="M5 13V2.500C5 .5 8 .5 8 2.500V8c1-1 2.600-.6 2.800.6 1-.8 2.400-.3 2.600.8 1.300-.6 2.800 0 2.800 1.600v4c0 4-2 6-5.500 6S5.500 20 4.500 18L1.500 14c-1.300-2 1-3.500 2.300-2.200z"
          fill="#fff"
          stroke="#111"
          strokeWidth="1.2"
        />
        <path d="M8 8v4M10.800 8.600V12M13.500 9.500V12" stroke="#111" />
      </Cursor>

      <Taskbar>
        <TaskButton $w={45} aria-label="Start">
          <FaWindows size={16} />
        </TaskButton>
        <SearchBox>
          <Line w={16} h={16} sw={1.3}>
            <circle cx="10" cy="6" r="5" />
            <path d="M6.500 9.500 1 15" />
          </Line>
          <input placeholder="Type here to search" aria-label="Search Windows" />
          <SearchArt />
        </SearchBox>
        <TaskButton aria-label="Task View">
          <Line w={16} h={16} sw={1.3}>
            <path d="M1 1v2h9V1M1 15v-2h9v2M1 5h9v6H1zM14 1v14" />
            <path d="M13 6h2v2h-2z" fill="#fff" />
          </Line>
        </TaskButton>
        <TaskButton $w={48} aria-label="Edge">
          <EdgeLogo />
        </TaskButton>
        <TaskButton $w={44} aria-label="File Explorer">
          <FolderLogo />
        </TaskButton>
        <TaskButton $w={47} aria-label="Microsoft Store">
          <StoreLogo />
        </TaskButton>
        <TaskButton aria-label="Outlook">
          <OutlookLogo />
        </TaskButton>
        <TaskButton aria-label="Teams">
          <TeamsLogo />
          <Count $right={2}>1</Count>
        </TaskButton>
        <TaskButton aria-label="Chrome">
          <ChromeLogo />
        </TaskButton>
        <TaskButton $open aria-label="WhatsApp">
          <SiWhatsapp size={22} color="#27c05a" />
          <Count $right={2}>2</Count>
        </TaskButton>
        <TaskButton $open $active aria-label="Chrome window">
          <ChromeLogo />
        </TaskButton>
        <TaskButton aria-label="WPS Office">
          <WpsLogo />
        </TaskButton>
        <TaskButton aria-label="AnyDesk">
          <AnyDeskLogo />
        </TaskButton>
        <TaskButton $open aria-label="Screen Recorder">
          <RecorderLogo />
        </TaskButton>
        <Tray>
          <Weather>
            <WeatherIcon />
            <span>32°C&nbsp; Cloudy</span>
          </Weather>
          <TrayIcons>
            <Chevron size={11} sw={1.2} up />
            <MdMic size={18} />
          </TrayIcons>
          <TrayClock>
            3:31 PM
            <br />
            7/9/2025
          </TrayClock>
          <TaskButton $w={38} aria-label="Notification center">
            <NoteIcon />
            <Count $right={4} $bottom={-8}>
              1
            </Count>
          </TaskButton>
        </Tray>
      </Taskbar>
    </Screen>
  );
}

export default App;
